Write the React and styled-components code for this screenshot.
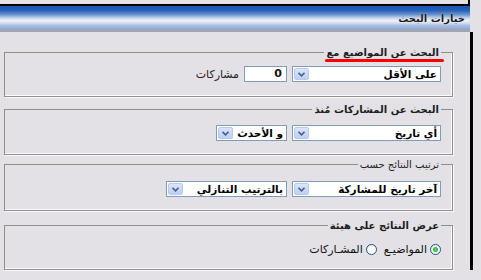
import styled, { createGlobalStyle } from "styled-components";

const GlobalStyle = createGlobalStyle`
  html, body {
    margin: 0;
    padding: 0;
    background: #e3e1e5;
    font-family: "DejaVu Sans", "Liberation Sans", sans-serif;
    font-size: 11px;
    color: #111;
  }
`;

const Page = styled.div`
  width: 481px;
  height: 280px;
  overflow: hidden;
  direction: rtl;
`;

const TopEdge = styled.div`
  width: 468px;
  height: 4px;
  margin-right: 11px;
  border-bottom: 2px solid #000;
  border-right: 2px solid #000;
`;

const Header = styled.div`
  width: 470px;
  height: 26px;
  margin-right: 11px;
  box-sizing: border-box;
  padding-right: 5px;
  display: flex;
  align-items: center;
  font-size: 10px;
  font-weight: bold;
  color: #1c1c1c;
  text-shadow: 0 0 1px #fff;
  background: linear-gradient(
    to bottom,
    #1c55ae 0%,
    #255fb6 18%,
    #6b93d0 36%,
    #c4d3ed 50%,
    #eef1f8 60%,
    #d7e0f1 70%,
    #a9bde0 82%,
    #8ea4cf 100%
  );
  border-bottom: 2px solid #a6a5ab;
`;

const Content = styled.div`
  width: 467px;
  margin-right: 8px;
  border-right: 3px solid #000;
  padding: 14px 17px 0 0;
  display: flex;
  flex-direction: column;
`;

const Group = styled.fieldset`
  margin: ${(p) => p.$mt || 0}px 0 0 0;
  padding: ${(p) => p.$pt || 7}px 11px ${(p) => p.$pb || 13}px 0;
  box-sizing: border-box;
  width: 449px;
  border: 1px solid #8f8f8a;
  box-shadow: inset -1px -1px 0 #fbfbfb, 1px 1px 0 #fbfbfb;
  min-width: 0;
`;

const Legend = styled.legend`
  padding: 0 2px;
  line-height: 13px;
  font-size: 10px;
  font-weight: ${(p) => (p.$plain ? "normal" : "bold")};
  color: ${(p) => (p.$plain ? "#1f1f1f" : "#1e1e1e")};
  position: relative;
  ${(p) =>
    p.$marked &&
    `
    &::after {
      content: "";
      position: absolute;
      left: 1px;
      right: -3px;
      bottom: -3px;
      height: 3px;
      border-radius: 2px;
      background: #ff0000;
    }
  `}
`;

const Row = styled.div`
  display: flex;
  align-items: center;
  gap: 5px;
`;

const Select = styled.div`
  width: ${(p) => p.$w}px;
  height: 16px;
  box-sizing: border-box;
  border: 1px solid #7f9db9;
  background: #fff;
  display: flex;
  align-items: center;
  justify-content: space-between;
  padding: 0 3px 0 1px;
  font-size: 10.5px;
  font-weight: bold;
  color: #000;
  white-space: nowrap;
`;

const Arrow = styled.span`
  width: 15px;
  height: 12px;
  box-sizing: border-box;
  border: 1px solid #b8c9ee;
  border-radius: 2px;
  background: linear-gradient(to bottom, #dbe5fb, #bccff7);
  display: flex;
  align-items: center;
  justify-content: center;
`;

const NumBox = styled.div`
  width: 43px;
  height: 16px;
  box-sizing: border-box;
  border: 1px solid #7f9db9;
  background: #fff;
  padding: 0 4px;
  font-weight: bold;
  line-height: 14px;
`;

const Label = styled.span`
  color: #222;
`;

const RadioRow = styled.div`
  display: flex;
  align-items: center;
  height: 13px;
`;

const Radio = styled.span`
  width: 11px;
  height: 11px;
  box-sizing: border-box;
  border-radius: 50%;
  border: 1px solid #1d5281;
  background: radial-gradient(circle at 60% 60%, #ffffff 40%, #dcdcd6 100%);
  display: flex;
  align-items: center;
  justify-content: center;
  margin-left: 3px;
  &::after {
    content: "";
    width: 5px;
    height: 5px;
    border-radius: 50%;
    background: ${(p) => (p.$on ? "radial-gradient(circle, #5fe35f, #1a9a1a)" : "transparent")};
  }
`;

const RadioLabel = styled.span`
  margin-left: ${(p) => p.$gap || 0}px;
  color: #111;
`;

function Chevron() {
  return (
    <svg width="7" height="5" viewBox="0 0 7 5">
      <path d="M0.5 0.8 L3.5 3.8 L6.5 0.8" fill="none" stroke="#4d6185" strokeWidth="1.6" />
    </svg>
  );
}

function Drop({ w, children }) {
  return (
    <Select $w={w}>
      <span>{children}</span>
      <Arrow>
        <Chevron />
      </Arrow>
    </Select>
  );
}

export default function App() {
  return (
    <Page>
      <GlobalStyle />
      <TopEdge />
      <Header>خيارات البحث</Header>
      <Content>
        <Group $pt={7} $pb={14}>
          <Legend $marked>البحث عن المواضيع مع</Legend>
          <Row>
            <Drop w={149}>على الأقل</Drop>
            <NumBox>0</NumBox>
            <Label>مشاركات</Label>
          </Row>
        </Group>
        <Group $mt={6} $pt={9} $pb={13}>
          <Legend>البحث عن المشاركات مُنذ</Legend>
          <Row>
            <Drop w={149}>أي تاريخ</Drop>
            <Drop w={71}>و الأحدث</Drop>
          </Row>
        </Group>
        <Group $mt={3} $pt={10} $pb={13}>
          <Legend $plain>ترتيب النتائج حسب</Legend>
          <Row>
            <Drop w={149}>آخر تاريخ للمشاركة</Drop>
            <Drop w={121}>بالترتيب التنازلي</Drop>
          </Row>
        </Group>
        <Group $mt={8} $pt={11} $pb={13}>
          <Legend>عرض النتائج على هيئة</Legend>
          <RadioRow>
            <Radio $on />
            <RadioLabel $gap={7}>المواضيـع</RadioLabel>
            <Radio />
            <RadioLabel>المشـاركات</RadioLabel>
          </RadioRow>
        </Group>
      </Content>
    </Page>
  );
}
